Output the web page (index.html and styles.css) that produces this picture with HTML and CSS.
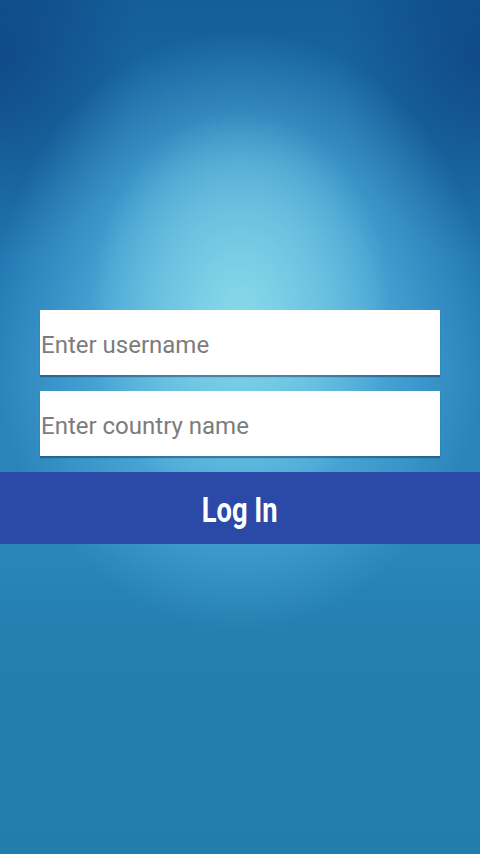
FILE: index.html
```html
<!DOCTYPE html>
<html>
<head>
<meta charset="utf-8">
<link rel="stylesheet" href="styles.css">
</head>
<body>
<div class="screen">
  <form class="login">
    <input class="field" type="text" placeholder="Enter username">
    <input class="field" type="text" placeholder="Enter country name">
    <button class="btn" type="button"><span class="btn-label">Log In</span></button>
  </form>
</div>
</body>
</html>
```
FILE: styles.css
```css
html, body {
  margin: 0;
  padding: 0;
  height: 100%;
}
body {
  font-family: Roboto, "Liberation Sans", sans-serif;
}
.screen {
  width: 480px;
  height: 854px;
  display: flex;
  flex-direction: column;
  justify-content: center;
  background:
    radial-gradient(ellipse 150px 200px at 240px 310px, rgba(140,220,232,0.9), rgba(140,220,232,0.4) 60%, rgba(140,220,232,0) 100%),
    radial-gradient(ellipse 250px 300px at 240px 330px, rgba(95,190,232,0.95), rgba(95,190,232,0.6) 55%, rgba(95,190,232,0) 100%),
    radial-gradient(ellipse 140px 200px at 0px 60px, rgba(8,50,110,0.5), rgba(8,50,110,0) 100%),
    radial-gradient(ellipse 140px 200px at 480px 60px, rgba(8,50,110,0.5), rgba(8,50,110,0) 100%),
    linear-gradient(to bottom, #145d99 0%, #1f74ae 25%, #2a82bb 45%, #2b86ba 62%, #247faf 76%, #227dad 100%);
}
.login {
  display: flex;
  flex-direction: column;
  gap: 16px;
  margin: 0;
}
.field {
  box-sizing: border-box;
  height: 65px;
  margin: 0 40px;
  border: none;
  outline: none;
  padding: 4px 0 0 1px;
  background: #ffffff;
  font-family: Roboto, "Liberation Sans", sans-serif;
  font-size: 24px;
  color: #333;
  box-shadow: 0 2px 1px rgba(20,50,90,0.45);
}
.field::placeholder {
  color: #7c7c7c;
}
.btn {
  height: 72px;
  border: none;
  background: #2b4aa7;
  color: #ffffff;
  padding: 0;
  display: flex;
  align-items: center;
  justify-content: center;
  cursor: pointer;
}
.btn-label {
  display: inline-block;
  font-family: Roboto, "Liberation Sans", sans-serif;
  font-weight: 700;
  font-size: 35px;
  transform: scaleX(0.78);
  margin-top: 4px;
}
```
